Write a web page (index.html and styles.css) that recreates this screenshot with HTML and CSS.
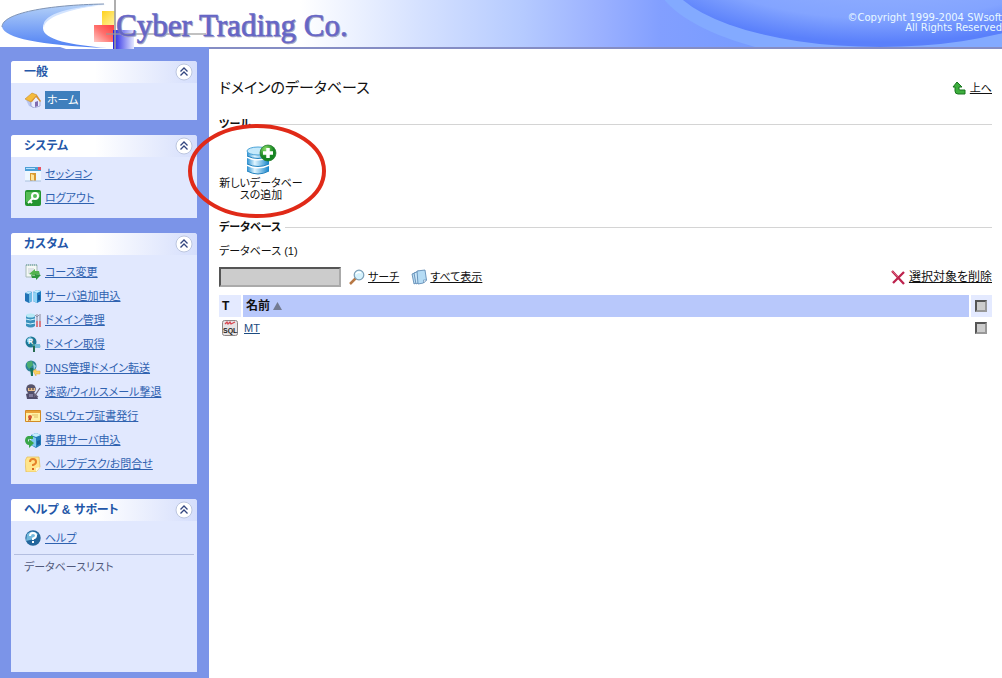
FILE: index.html
```html
<!DOCTYPE html>
<html lang="ja">
<head>
<meta charset="utf-8">
<title>ドメインのデータベース</title>
<link rel="stylesheet" href="styles.css">
</head>
<body>
<header class="banner">
  <svg class="banner-art" width="360" height="47" viewBox="642 0 360 47" aria-hidden="true">
    <defs>
      <radialGradient id="globe" cx="50%" cy="35%" r="62%"><stop offset="0.3" stop-color="#93b0ff"/><stop offset="0.75" stop-color="#83a4ff"/><stop offset="1" stop-color="#5a80fb"/></radialGradient>
    </defs>
    <ellipse cx="880" cy="-30" rx="228" ry="92" fill="#83aaff"/>
    <ellipse cx="880" cy="-30" rx="214" ry="77" fill="url(#globe)"/>
  </svg>
  <svg class="logo" width="360" height="49" viewBox="0 0 360 49" role="img" aria-label="Cyber Trading Co.">
    <defs>
      <linearGradient id="moon" x1="0" y1="0" x2="0" y2="1"><stop offset="0" stop-color="#b5d2f8"/><stop offset="1" stop-color="#4f80f4"/></linearGradient>
      <linearGradient id="ly" x1="0" y1="0" x2="1" y2="1"><stop offset="0" stop-color="#ffd21c"/><stop offset="1" stop-color="#fff2a0"/></linearGradient>
      <linearGradient id="lr" x1="1" y1="0" x2="0" y2="1"><stop offset="0" stop-color="#ff3c3c"/><stop offset="0.5" stop-color="#ff6f6c"/><stop offset="1" stop-color="#ffc9c5"/></linearGradient>
      <linearGradient id="lb"><stop offset="0" stop-color="#2222e4"/><stop offset="1" stop-color="#e4e8ff"/></linearGradient>
    </defs>
    <path d="M57 46h60v3H66z" fill="#fff"/>
    <path d="M106 4C48 5 2 13 2 27c3 11 36 18 105 21C72 45 43 40 43 28S70 8 106 4z" fill="url(#moon)"/>
    <path d="M106 5C80 7 44 15 44 28C40 16 64 7 106 5z" fill="#d3e4ff"/>
    <path d="M104 4C48 5 2 13 2 27" fill="none" stroke="#7e93b4"/>
    <path d="M102 11h13v14h-13z" fill="url(#ly)"/>
    <path d="M94 25h20v17H94z" fill="url(#lr)"/>
    <path d="M113 30h21v19h-21z" fill="url(#lb)"/>
    <path d="M106 34h100" stroke="#999" stroke-width="2" opacity="0.6"/>
    <path d="M115 0v49" stroke="#9b9b9b" stroke-width="2" opacity="0.8"/>
    <text class="logo-text logo-shade" x="117" y="37">Cyber Trading Co.</text>
    <text class="logo-text" x="116" y="36">Cyber Trading Co.</text>
  </svg>
  <p class="copyright">©Copyright 1999-2004 SWsoft<br>All Rights Reserved</p>
</header>

<div class="layout">
  <nav class="sidebar">
    <section class="panel">
      <div class="panel-head"><h2>一般</h2><button class="fold" aria-label="折りたたむ"><svg width="18" height="18" viewBox="0 0 18 18"><circle cx="9" cy="9" r="8" fill="#fff" stroke="#bcc6df"/><path d="M5.500 8.500L9 5l3.500 3.500M5.500 12.500L9 9l3.500 3.500" fill="none" stroke="#33467f" stroke-width="1.300"/></svg></button></div>
      <ul class="menu">
        <li><svg class="icon" viewBox="0 0 16 16"><path d="M1 8l3 6 5 2V9z" fill="#b8c4ed"/><path d="M6 8l5-4 4 5v5l-6 2-3-2z" fill="#e9edff" stroke="#8e97ca" stroke-width=".7"/><path d="M0 7l7-6 5 2-6 7z" fill="#f5bb3c" stroke="#c28b26" stroke-width=".6"/><path d="M12 3l4 6-1 1-4-5-4 5-1-1z" fill="#d99435"/><path d="M10 10l3-1v5l-3 1z" fill="#806db0"/></svg><a class="current" href="#">ホーム</a></li>
      </ul>
    </section>

    <section class="panel">
      <div class="panel-head"><h2>システム</h2><button class="fold" aria-label="折りたたむ"><svg width="18" height="18" viewBox="0 0 18 18"><circle cx="9" cy="9" r="8" fill="#fff" stroke="#bcc6df"/><path d="M5.500 8.500L9 5l3.500 3.500M5.500 12.500L9 9l3.500 3.500" fill="none" stroke="#33467f" stroke-width="1.300"/></svg></button></div>
      <ul class="menu">
        <li><svg class="icon" viewBox="0 0 16 16"><path d="M0 1h16v14H0z" fill="#eef7ff"/><path d="M0 1h16v4H0z" fill="#4d9fd5"/><path d="M1 2h9v1H1z" fill="#b9e2ff"/><path d="M13 1h3v3h-3z" fill="#e65262"/><path d="M5 7h6v8H5z" fill="#d99a32"/><path d="M6 8l3 1v6l-3-1z" fill="#ffe69b"/><path d="M0 15h16" stroke="#a9bfdd"/></svg><a href="#">セッション</a></li>
        <li><svg class="icon" viewBox="0 0 16 16"><rect width="16" height="16" rx="2" fill="#23942f"/><path d="M1 2h14v5L1 12z" fill="#55bc55"/><circle cx="10" cy="6" r="3" fill="none" stroke="#fff" stroke-width="2"/><path d="M8 8l-5 5M5 11l2 2" stroke="#fff" stroke-width="2"/></svg><a href="#">ログアウト</a></li>
      </ul>
    </section>

    <section class="panel">
      <div class="panel-head"><h2>カスタム</h2><button class="fold" aria-label="折りたたむ"><svg width="18" height="18" viewBox="0 0 18 18"><circle cx="9" cy="9" r="8" fill="#fff" stroke="#bcc6df"/><path d="M5.500 8.500L9 5l3.500 3.500M5.500 12.500L9 9l3.500 3.500" fill="none" stroke="#33467f" stroke-width="1.300"/></svg></button></div>
      <ul class="menu">
        <li><svg class="icon" viewBox="0 0 16 16"><path d="M1 1h11v12H1z" fill="#f4f8f6" stroke="#a8bbb6"/><path d="M1 1h11" stroke="#58999a" stroke-dasharray="1 1"/><path d="M3 5h6M3 7h5M3 9h4" stroke="#c8cfd6"/><path d="M4 10l6-5v2h4l1 4-4-1v2z" fill="#53b34f"/><path d="M16 11l-5 5v-2H7l-1-3 4 1v-2z" fill="#2f963d"/></svg><a href="#">コース変更</a></li>
        <li><svg class="icon" viewBox="0 0 16 16"><path d="M0 5l4-2 3 1v9l-3 2-4-2z" fill="#2173b6"/><path d="M0 5l4-2 3 1-3 2z" fill="#bdeaff"/><path d="M4 6l3-2v9l-3 2z" fill="#6fbbe4"/><path d="M8 4l4-2 4 1v10l-4 2-4-2z" fill="#1f7cc0"/><path d="M8 4l4-2 4 1-4 2z" fill="#c7efff"/><path d="M8 4l4 1v10l-4-2z" fill="#91d3f4"/><path d="M13 7h2v5h-2z" fill="#125a9b"/></svg><a href="#">サーバ追加申込</a></li>
        <li><svg class="icon" viewBox="0 0 16 16"><path d="M1 3h9v11q-4 3-9 0z" fill="#3a91bd"/><ellipse cx="5.500" cy="3.500" rx="4.500" ry="2" fill="#b8e9f6"/><path d="M1 7q4 2 9 0M1 11q4 2 9 0" fill="none" stroke="#d6f5ff"/><path d="M12 2v12M15 2v12" stroke="#a8a9bc" stroke-width="1.500"/><path d="M12 9v6M15 9v6" stroke="#d97b84" stroke-width="2"/><path d="M10 3l2 2 2-2" stroke="#8e8fa7" fill="none"/></svg><a href="#">ドメイン管理</a></li>
        <li><svg class="icon" viewBox="0 0 16 16"><circle cx="6" cy="6" r="5.500" fill="#1d7794"/><path d="M2 3l3-2 3 2-2 4-4-1z" fill="#85c8e5"/><text class="icon-r" x="3" y="8">R</text><path d="M7 8h7q2 1 1 4h-5v4H8v-5z" fill="#489e9c"/><path d="M10 8h5v4h-5z" fill="#76bddb"/><path d="M9 10v6" stroke="#276c50" stroke-width="2"/></svg><a href="#">ドメイン取得</a></li>
        <li><svg class="icon" viewBox="0 0 16 16"><circle cx="6" cy="6" r="5.500" fill="#2e8399"/><path d="M2 2l5-1 1 4-4 4-2-3z" fill="#4bac71"/><path d="M8 3l3 3-2 4z" fill="#9bd8e8"/><path d="M5 8h3v8H6z" fill="#16745b"/><path d="M8 11l3-2v2h4v3h-4v2z" fill="#f8cf60" stroke="#d9a63f" stroke-width=".5"/></svg><a href="#">DNS管理ドメイン転送</a></li>
        <li><svg class="icon" viewBox="0 0 16 16"><circle cx="6" cy="5" r="4.800" fill="#57536a"/><path d="M3 4h7v3H3z" fill="#edc18c"/><path d="M4 5h2M7 5h2" stroke="#302c3b"/><path d="M1 10q5-3 10 0l2 5H2z" fill="#514d6b"/><path d="M4 10h4v3H4z" fill="#817c9b"/><path d="M9 13l6-9M9 10l4 3" stroke="#6e667c" stroke-width="1.300"/></svg><a href="#">迷惑/ウィルスメール撃退</a></li>
        <li><svg class="icon" viewBox="0 0 16 16"><path d="M.500 2.500h15v11H.500z" fill="#fff1a5" stroke="#d28b24"/><path d="M1 3h14v2H1z" fill="#e9a33a"/><path d="M7 7h6M9 9h4" stroke="#e0bd62"/><circle cx="5" cy="9" r="2" fill="#d85735"/><path d="M4 10l-1 3 2-1 1 1v-3z" fill="#bd482e"/></svg><a href="#">SSLウェブ証書発行</a></li>
        <li><svg class="icon" viewBox="0 0 16 16"><path d="M6 3l5-2 5 2v10l-5 3-5-3z" fill="#237bb9"/><path d="M6 3l5-2 5 2-5 2z" fill="#c6eeff"/><path d="M6 4l5 2v9l-5-2z" fill="#80c8ee"/><path d="M12 9l3-1v4l-3 1z" fill="#165c98"/><path d="M8 4H3Q0 5 0 9q1 4 4 4v3l5-5-5-4v3Q2 8 4 7h4z" fill="#39a64a"/></svg><a href="#">専用サーバ申込</a></li>
        <li><svg class="icon" viewBox="0 0 16 16"><path d="M2 1h12l1 10-4 5H1L0 5z" fill="#ffe58c" stroke="#e2ba54" stroke-width=".7"/><path d="M11 16v-4l4-1z" fill="#fffadd"/><path d="M5 6q0-3 3-3t3 3q0 2-3 3v1" fill="none" stroke="#e58129" stroke-width="2"/><path d="M7 12h2v2H7z" fill="#d86620"/></svg><a href="#">ヘルプデスク/お問合せ</a></li>
      </ul>
    </section>

    <section class="panel panel-help">
      <div class="panel-head"><h2>ヘルプ &amp; サポート</h2><button class="fold" aria-label="折りたたむ"><svg width="18" height="18" viewBox="0 0 18 18"><circle cx="9" cy="9" r="8" fill="#fff" stroke="#bcc6df"/><path d="M5.500 8.500L9 5l3.500 3.500M5.500 12.500L9 9l3.500 3.500" fill="none" stroke="#33467f" stroke-width="1.300"/></svg></button></div>
      <ul class="menu">
        <li><svg class="icon" viewBox="0 0 16 16"><circle cx="8" cy="8" r="7.700" fill="#23669c"/><path d="M2 4q5-5 11 0L9 9 1 11z" fill="#73b9dc"/><path d="M5 6q0-3 3-3t3 2.500Q11 8 8 8.500V10" fill="none" stroke="#fff" stroke-width="2"/><path d="M7 11h2v2H7z" fill="#fff"/></svg><a href="#">ヘルプ</a></li>
      </ul>
      <p class="hint">データベースリスト</p>
    </section>
  </nav>

  <main class="content">
    <div class="title-row">
      <h1>ドメインのデータベース</h1>
      <a class="action" href="#"><svg class="icon" viewBox="0 0 16 16"><path d="M6 2L2 7h2v4q0 3 3 3h7v-4H9q-1 0-1-1V7h3z" fill="#3dae3d" stroke="#19741f"/></svg><span>上へ</span></a>
    </div>

    <h2 class="rule-head">ツール</h2>
    <div class="tools">
      <a class="tool" href="#">
        <svg width="32" height="34" viewBox="0 0 32 34" aria-hidden="true">
          <defs><linearGradient id="db"><stop offset="0" stop-color="#2d91d2"/><stop offset=".35" stop-color="#dff5ff"/><stop offset="1" stop-color="#1483cb"/></linearGradient><radialGradient id="plus" cx=".35" cy=".25"><stop offset="0" stop-color="#8ade68"/><stop offset="1" stop-color="#168522"/></radialGradient></defs>
          <path d="M2 8v5q11 5 22 0V8zM2 15v6q11 5 22 0v-6q-11 5-22 0zM2 23v5q11 6 22 0v-5q-11 5-22 0z" fill="url(#db)"/>
          <ellipse cx="13" cy="8" rx="11" ry="4" fill="#c5e9fb" stroke="#4ba3d7"/>
          <path d="M2 13q11 5 22 0M2 21q11 5 22 0M2 28q11 6 22 0" fill="none" stroke="#2383bf"/>
          <circle cx="23" cy="10" r="8" fill="url(#plus)" stroke="#23792a" stroke-width=".7"/>
          <path d="M23 5v10M18 10h10" stroke="#fff" stroke-width="3.500"/>
        </svg>
        <span>新しいデータベー<br>スの追加</span>
      </a>
      <svg class="marker" width="140" height="96" viewBox="0 0 140 96" aria-hidden="true"><ellipse cx="70" cy="48" rx="67" ry="45" fill="none" stroke="#e02a18" stroke-width="4"/></svg>
    </div>

    <h2 class="rule-head">データベース</h2>
    <p class="count">データベース (1)</p>
    <form class="search">
      <input class="search-box" type="text" aria-label="データベースの検索">
      <a class="action" href="#"><svg class="icon" viewBox="0 0 16 16"><path d="M7 9l-6 6" stroke="#b87945" stroke-width="2.500"/><circle cx="10" cy="6" r="4.800" fill="#d5f2fd" stroke="#7c9fb7" stroke-width="1.200"/><path d="M7 5q2-3 5-1" fill="none" stroke="#fff" stroke-width="1.500"/></svg><span>サーチ</span></a>
      <a class="action action-all" href="#"><svg class="icon" viewBox="0 0 16 16"><path d="M1 5l5-2 1 10-4 2z" fill="#bcdcf2" stroke="#5483ae" stroke-width=".8"/><path d="M3 4l5-2 1 11-4 2z" fill="#cce6f7" stroke="#5483ae" stroke-width=".8"/><path d="M6 2l8-1 1.500 10-3 3L7 15z" fill="#b5dcf5" stroke="#5483ae" stroke-width=".8"/><path d="M12.500 14v-3h3z" fill="#fff" stroke="#5483ae" stroke-width=".6"/></svg><span>すべて表示</span></a>
      <a class="action action-delete" href="#"><svg class="icon" viewBox="0 0 16 16"><path d="M2 2l12 13M14 3L3 14" stroke="#bd234d" stroke-width="2.300"/><path d="M2 2l6 6" stroke="#dc5d77"/></svg><span>選択対象を削除</span></a>
    </form>

    <table class="list">
      <thead><tr><th class="col-type" scope="col">T</th><th class="col-name" scope="col">名前 <svg width="9" height="8" viewBox="0 0 9 8" aria-hidden="true"><path d="M4.500 0L9 8H0z" fill="#737b93"/></svg></th><th class="col-check" scope="col"><input type="checkbox" aria-label="すべて選択"></th></tr></thead>
      <tbody><tr><td class="col-type"><svg class="icon" viewBox="0 0 16 16"><rect x=".5" y=".5" width="15" height="15" rx="2" fill="#e7e3e4" stroke="#8d8686"/><path d="M3 4l2-2 1 2 2-2 1 2 4-2" fill="none" stroke="#d7454f" stroke-width="1.300"/><text class="icon-sql" x="1" y="13">SQL</text></svg></td><td class="col-name"><a href="#">MT</a></td><td class="col-check"><input type="checkbox" aria-label="MTを選択"></td></tr></tbody>
    </table>
  </main>
</div>
</body>
</html>
```
FILE: styles.css
```css
* { box-sizing: border-box; }

body {
  margin: 0;
  min-height: 100vh;
  display: flex;
  flex-direction: column;
  background: #fff;
  color: #111;
  font: 11px/16px "Liberation Sans", "Noto Sans CJK JP", sans-serif;
  font-feature-settings: "palt";
}

h1, h2, p, ul { margin: 0; padding: 0; }

/* Banner */
.banner {
  position: relative;
  display: flex;
  justify-content: space-between;
  height: 49px;
  overflow: hidden;
  background:
    linear-gradient(90deg, #7b94e8 209px, #858dc4 209px) bottom / 100% 2px no-repeat,
    linear-gradient(90deg, #fff 300px, #d5e1ff 420px, #b6cbff 520px, #9bb1ff 600px, #829fff 660px, #769bff 760px, #83aaff 960px);
}
.banner-art { position: absolute; top: 0; right: 0; }
.logo { position: relative; flex: none; }
.logo-text {
  font: 31px "Liberation Serif", serif;
  fill: #6666c6;
  stroke: #6666c6;
  stroke-width: 0.6px;
}
.logo-shade { fill: #a5a5c4; stroke: #a5a5c4; }
.copyright {
  position: relative;
  padding-top: 13px;
  color: #e9f8ff;
  font: 10px/10px "DejaVu Sans", sans-serif;
  text-align: right;
  white-space: nowrap;
}

.layout { flex: 1; display: flex; }

/* Sidebar */
.sidebar {
  flex: none;
  display: flex;
  flex-direction: column;
  gap: 15px;
  width: 209px;
  padding: 12px 12px 6px 11px;
  background: #7b94e8;
}
.panel {
  border-radius: 3px 3px 0 0;
  background: #e1e8fe;
  overflow: hidden;
}
.panel-help { flex: 1; }
.panel-head {
  display: flex;
  align-items: center;
  justify-content: space-between;
  height: 22px;
  padding: 0 4px 0 13px;
  background: linear-gradient(90deg, #fff 45%, #d5defc);
}
.panel-head h2 { color: #2457a8; font-size: 12px; line-height: 16px; }
.fold { display: flex; padding: 0; border: 0; background: none; }
.menu { padding: 5px 14px 8px; list-style: none; }
.menu li { display: flex; align-items: center; gap: 4px; height: 24px; white-space: nowrap; }
.menu a { color: #2f62b0; }
.menu .current {
  padding: 1px 2px;
  background: #3f7fbd;
  color: #fff;
  text-decoration: none;
}
.panel-help .menu { padding-bottom: 4px; }
.hint {
  margin: 0 3px;
  padding: 4px 10px;
  border-top: 1px solid #b3bee0;
  color: #515a7c;
}
.icon { flex: none; display: block; width: 16px; height: 16px; }
.icon-r { font: bold 7px "Liberation Sans", sans-serif; fill: #fff; }
.icon-sql { font: bold 7px "Liberation Sans", sans-serif; fill: #222; }

/* Content */
.content { flex: 1; min-width: 0; padding: 27px 10px 20px; }
.title-row { display: flex; align-items: center; justify-content: space-between; height: 24px; }
h1 { font-size: 15px; font-weight: normal; line-height: 24px; }
.action { display: flex; align-items: center; gap: 3px; color: #111; white-space: nowrap; }
.rule-head {
  display: flex;
  align-items: center;
  gap: 4px;
  margin-top: 16px;
  font-size: 11px;
  line-height: 16px;
}
.rule-head::after { content: ""; flex: 1; height: 1px; background: #d4d4d4; }
.tools { position: relative; display: flex; padding: 11px 0 2px; }
.tool {
  display: flex;
  flex-direction: column;
  align-items: center;
  width: 84px;
  color: #111;
  line-height: 12px;
  text-align: center;
  text-decoration: none;
  white-space: nowrap;
}
.marker { position: absolute; top: -9px; left: -32px; }
.count { margin-top: 8px; }
.search { display: flex; align-items: center; margin-top: 8px; }
.search-box {
  width: 122px;
  height: 20px;
  margin-right: 8px;
  border: 2px solid #888;
  border-color: #555 #aaa #aaa #555;
  border-radius: 0;
  background: #ccc;
}
.action-all { margin-left: 12px; }
.action-delete { margin-left: auto; font-size: 12px; }

.list { width: 100%; margin-top: 8px; border-collapse: collapse; }
.list th, .list td { height: 22px; padding: 0 3px; text-align: left; vertical-align: middle; }
.list th { background: #e4eaff; font-size: 12px; }
.list .col-type { width: 23px; border-right: 2px solid #fff; }
.list th.col-name { background: #b8c8fb; }
.list td.col-name { padding-left: 1px; }
.list .col-check { width: 22px; padding: 0 4px; border-left: 2px solid #fff; }
.list a { color: #1c4b80; }
.list input {
  display: block;
  appearance: none;
  width: 12px;
  height: 12px;
  margin: 0;
  border: 2px solid #777;
  border-color: #555 #999 #999 #555;
  background: #ccc;
}
```
